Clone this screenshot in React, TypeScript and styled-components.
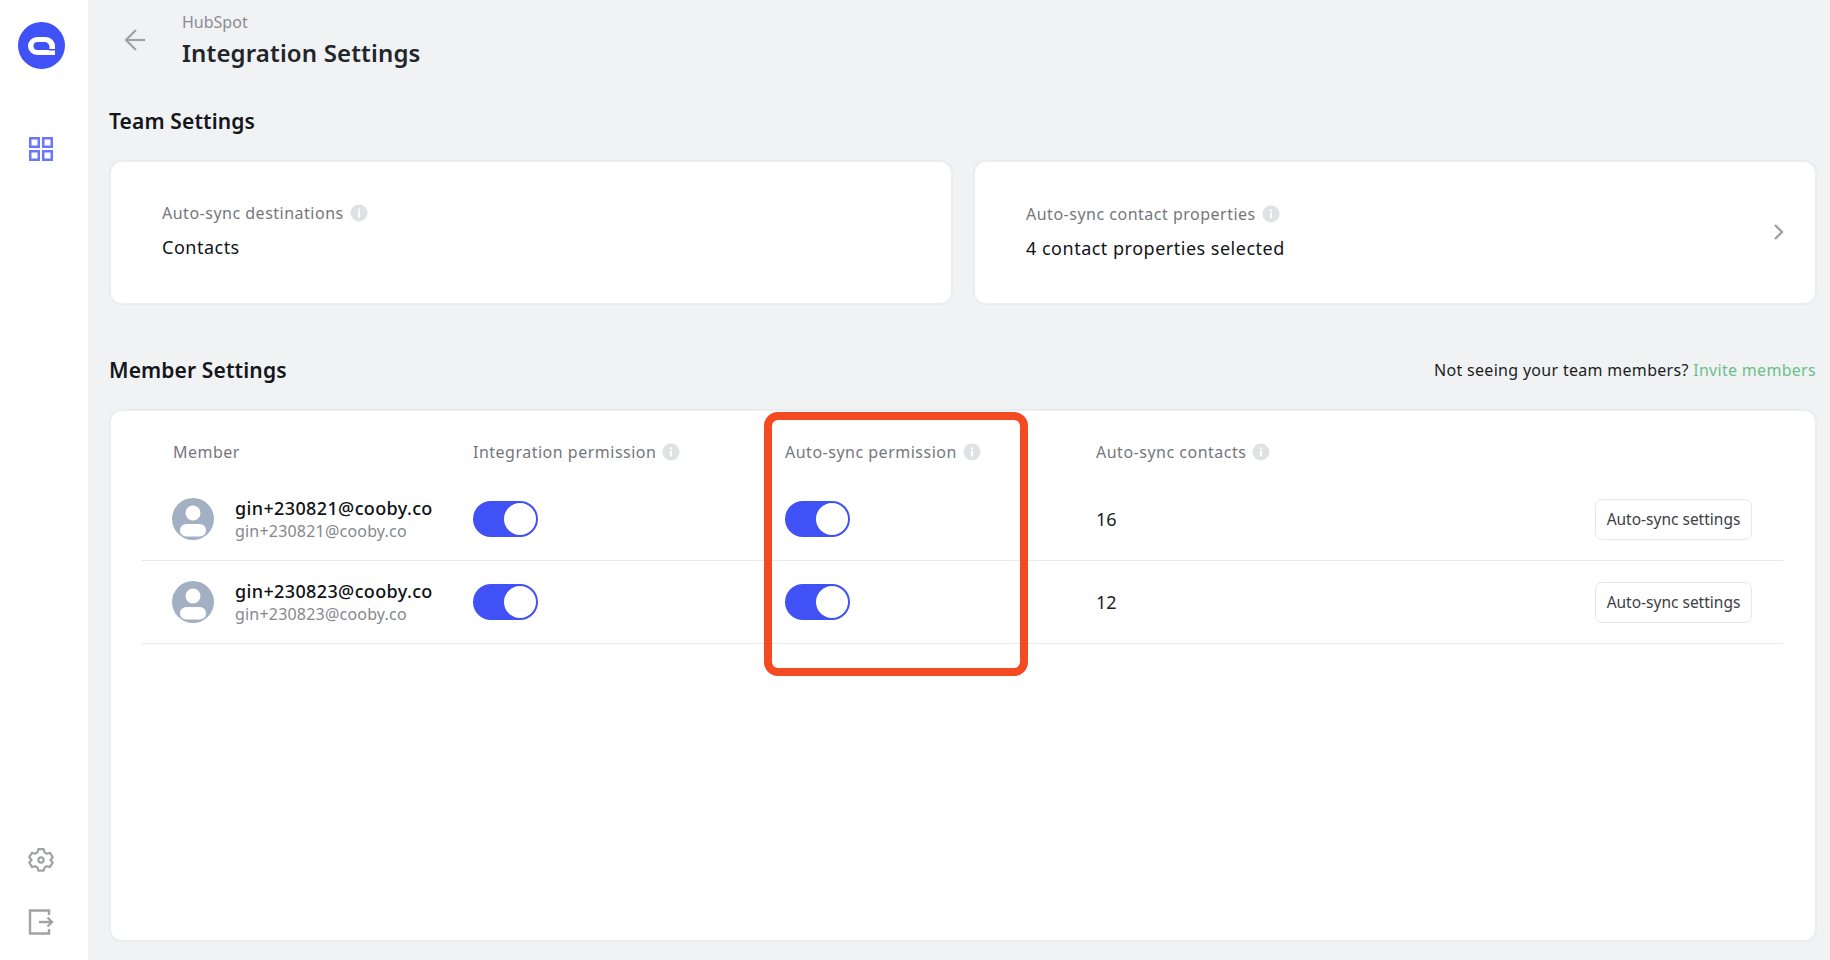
import React from "react"
import styled, { createGlobalStyle } from "styled-components"

const GlobalStyle = createGlobalStyle`
  html, body { margin: 0; padding: 0; height: 100%; }
  body { font-family: "Noto Sans", sans-serif; background: #f1f2f4; color: #111; overflow: hidden; }
  * { box-sizing: border-box; }
`

const Page = styled.div`
  display: flex;
  width: 1830px;
  height: 960px;
  position: relative;
`

const Sidebar = styled.aside`
  width: 88px;
  flex: none;
  background: #fff;
  display: flex;
  flex-direction: column;
  align-items: center;
  padding: 22px 6px 25px 0;
`

const NavButton = styled.div<{ $top?: number }>`
  display: flex;
  margin-top: ${p => p.$top ?? 0}px;
`

const Spacer = styled.div`
  flex: 1;
`

const Main = styled.main`
  flex: 1;
  padding: 0 14px 19px 22px;
  display: flex;
  flex-direction: column;
`

const Header = styled.header`
  display: flex;
  align-items: flex-start;
  height: 81px;
  padding: 12px 0 0 12px;
`

const BackIcon = styled.svg`
  width: 24px;
  height: 24px;
  margin: 16px 36px 0 0;
`

const HeaderText = styled.div`
  display: flex;
  flex-direction: column;
`

const Crumb = styled.div`
  font-size: 16px;
  line-height: 20px;
  color: #8a8d91;
`

const Title = styled.h1`
  margin: 5px 0 0;
  font-size: 24px;
  line-height: 32px;
  font-weight: 600;
  color: #22252b;
  letter-spacing: 0.15px;
`

const SectionRow = styled.div`
  display: flex;
  align-items: center;
  justify-content: space-between;
  height: 80px;
`

const SectionTitle = styled.h2`
  margin: 0 0 0 -1px;
  font-size: 21px;
  line-height: 28px;
  font-weight: 600;
  color: #14161a;
  letter-spacing: 0.13px;
`

const InviteText = styled.div`
  font-size: 16px;
  letter-spacing: 0.3px;
  color: #1c1e22;
`

const InviteLink = styled.a`
  color: #6cc08b;
`

const CardRow = styled.div`
  display: grid;
  grid-template-columns: 1fr 1fr;
  gap: 22px;
  margin-bottom: 26px;
`

const Card = styled.div`
  background: #fff;
  border: 1px solid #eeeff1;
  border-radius: 12px;
  box-shadow: 0 0 1px 1px rgba(0, 0, 0, 0.03);
`

const SummaryCard = styled(Card)<{ $lift: number }>`
  height: 143px;
  display: flex;
  align-items: center;
  justify-content: space-between;
  padding: 0 30px ${p => p.$lift}px 51px;
`

const SummaryBody = styled.div`
  display: flex;
  flex-direction: column;
  gap: 12px;
`

const Label = styled.div`
  display: flex;
  align-items: center;
  gap: 6px;
  font-size: 16px;
  line-height: 20px;
  color: #74777c;
  letter-spacing: 0.5px;
`

const SummaryValue = styled.div`
  font-size: 18px;
  line-height: 24px;
  color: #111317;
  letter-spacing: 0.5px;
`

const MemberCard = styled(Card)`
  flex: 1;
  padding: 0 32px 0 31px;
`

const HeadRow = styled.div`
  display: grid;
  grid-template-columns: 300px 312px 311px 1fr;
  height: 67px;
  padding: 15px 31px 0;
  align-items: center;
`

const MemberRow = styled.div`
  display: grid;
  grid-template-columns: 300px 312px 311px 1fr auto;
  height: 83px;
  padding: 0 31px;
  align-items: center;
  border-bottom: 1px solid #e7e9eb;
`

const MemberCell = styled.div`
  display: flex;
  align-items: center;
  gap: 20px;
  margin-left: -1px;
`

const Avatar = styled.svg`
  width: 42px;
  height: 42px;
  flex: none;
`

const MemberText = styled.div`
  display: flex;
  flex-direction: column;
  margin-left: 1px;
`

const MemberName = styled.div`
  font-size: 18px;
  line-height: 23px;
  font-weight: 500;
  letter-spacing: 0.37px;
  color: #0f1114;
`

const MemberEmail = styled.div`
  font-size: 16px;
  line-height: 20px;
  margin-top: 1px;
  color: #85888c;
  letter-spacing: 0.2px;
`

const Toggle = styled.div`
  width: 65px;
  height: 36px;
  border-radius: 18px;
  background: #4051f5;
  padding: 2px;
  display: flex;
  justify-content: flex-end;
`

const Knob = styled.div`
  width: 32px;
  height: 32px;
  border-radius: 50%;
  background: #fff;
`

const CountCell = styled.div`
  font-size: 18px;
  color: #1c1e22;
`

const SettingsButton = styled.button`
  height: 41px;
  width: 157px;
  background: #fff;
  border: 1px solid #e7e8ea;
  border-radius: 7px;
  font-family: inherit;
  font-size: 15.5px;
  color: #3d4045;
  padding: 0;
`

const Highlight = styled.div`
  position: absolute;
  left: 764px;
  top: 412px;
  width: 264px;
  height: 264px;
  border: 8px solid #f44a22;
  border-radius: 14px;
  pointer-events: none;
`

const InfoIcon = () => (
  <svg width="18" height="18" viewBox="0 0 18 18">
    <circle cx="9" cy="9" r="8.5" fill="#dfe1e3" />
    <circle cx="9" cy="5.4" r="1.2" fill="#fff" />
    <rect x="8" y="7.6" width="2" height="6" rx="0.6" fill="#fff" />
  </svg>
)

const members = [
  { email: "gin+230821@cooby.co", count: 16 },
  { email: "gin+230823@cooby.co", count: 12 },
]

export default function App() {
  return (
    <Page>
      <GlobalStyle />
      <Sidebar>
        <svg width="47" height="47" viewBox="0 0 47 47">
          <circle cx="23.5" cy="23.5" r="23.5" fill="#4051f5" />
          <path d="M19 15h9a9 9 0 0 1 9 9v9H19a9 9 0 0 1 0-18z" fill="#fff" />
          <path d="M19.5 20h7a5 5 0 0 1 5 5v3H19.500a4 4 0 0 1 0-8z" fill="#4051f5" />
          <rect x="31" y="27" width="7" height="1.500" fill="#4051f5" />
        </svg>
        <NavButton $top={68}>
          <svg width="24" height="24" viewBox="0 0 24 24" fill="none" stroke="#6b76f8" strokeWidth="2.500">
            <rect x="1.250" y="1.250" width="8.500" height="8.500" />
            <rect x="14.250" y="1.250" width="8.500" height="8.500" />
            <rect x="1.250" y="14.250" width="8.500" height="8.500" />
            <rect x="14.250" y="14.250" width="8.500" height="8.500" />
          </svg>
        </NavButton>
        <Spacer />
        <NavButton>
          <svg width="26" height="26" viewBox="0 0 26 26" fill="none" stroke="#a0a2a5" strokeWidth="2.200" strokeLinejoin="round">
            <path d="M10.400 2.200h5.200l1 3.200 2.300 1.300 3.200-.8 2.600 4.400-2.300 2.700 2.300 2.500-2.600 4.400-3.200-.7-2.300 1.300-1 3.200h-5.200l-1-3.200-2.300-1.300-3.200.7-2.600-4.400 2.300-2.500-2.300-2.700 2.600-4.400 3.200.8 2.300-1.300z" />
            <circle cx="13" cy="13" r="2.600" />
          </svg>
        </NavButton>
        <NavButton $top={36}>
          <svg width="26" height="26" viewBox="0 0 26 26" fill="none" stroke="#a0a2a5" strokeWidth="2.400">
            <path d="M21 6V1.500H2v23h19V20" />
            <path d="M11 13h13" />
            <path d="M19.500 8.500L24 13l-4.500 4.500" />
          </svg>
        </NavButton>
      </Sidebar>
      <Main>
        <Header>
          <BackIcon viewBox="0 0 24 24" fill="none" stroke="#a0a2a5" strokeWidth="2.200">
            <path d="M23 12H4" />
            <path d="M14 2L4 12l10 10" />
          </BackIcon>
          <HeaderText>
            <Crumb>HubSpot</Crumb>
            <Title>Integration Settings</Title>
          </HeaderText>
        </Header>
        <SectionRow>
          <SectionTitle>Team Settings</SectionTitle>
        </SectionRow>
        <CardRow>
          <SummaryCard $lift={4}>
            <SummaryBody>
              <Label>Auto-sync destinations <InfoIcon /></Label>
              <SummaryValue>Contacts</SummaryValue>
            </SummaryBody>
          </SummaryCard>
          <SummaryCard $lift={2}>
            <SummaryBody>
              <Label>Auto-sync contact properties <InfoIcon /></Label>
              <SummaryValue>4 contact properties selected</SummaryValue>
            </SummaryBody>
            <svg width="12" height="18" viewBox="0 0 12 18" fill="none" stroke="#a0a2a5" strokeWidth="2.400">
              <path d="M2 2l7 7-7 7" />
            </svg>
          </SummaryCard>
        </CardRow>
        <SectionRow>
          <SectionTitle>Member Settings</SectionTitle>
          <InviteText>
            Not seeing your team members? <InviteLink>Invite members</InviteLink>
          </InviteText>
        </SectionRow>
        <MemberCard>
          <HeadRow>
            <Label>Member</Label>
            <Label>Integration permission <InfoIcon /></Label>
            <Label>Auto-sync permission <InfoIcon /></Label>
            <Label>Auto-sync contacts <InfoIcon /></Label>
          </HeadRow>
          {members.map(m => (
            <MemberRow key={m.email}>
              <MemberCell>
                <Avatar viewBox="0 0 42 42">
                  <circle cx="21" cy="21" r="21" fill="#a3afc2" />
                  <circle cx="21" cy="15" r="7.500" fill="#fff" />
                  <rect x="8" y="26" width="26" height="12.500" rx="6.250" fill="#fff" />
                </Avatar>
                <MemberText>
                  <MemberName>{m.email}</MemberName>
                  <MemberEmail>{m.email}</MemberEmail>
                </MemberText>
              </MemberCell>
              <Toggle><Knob /></Toggle>
              <Toggle><Knob /></Toggle>
              <CountCell>{m.count}</CountCell>
              <SettingsButton>Auto-sync settings</SettingsButton>
            </MemberRow>
          ))}
        </MemberCard>
      </Main>
      <Highlight />
    </Page>
  )
}
